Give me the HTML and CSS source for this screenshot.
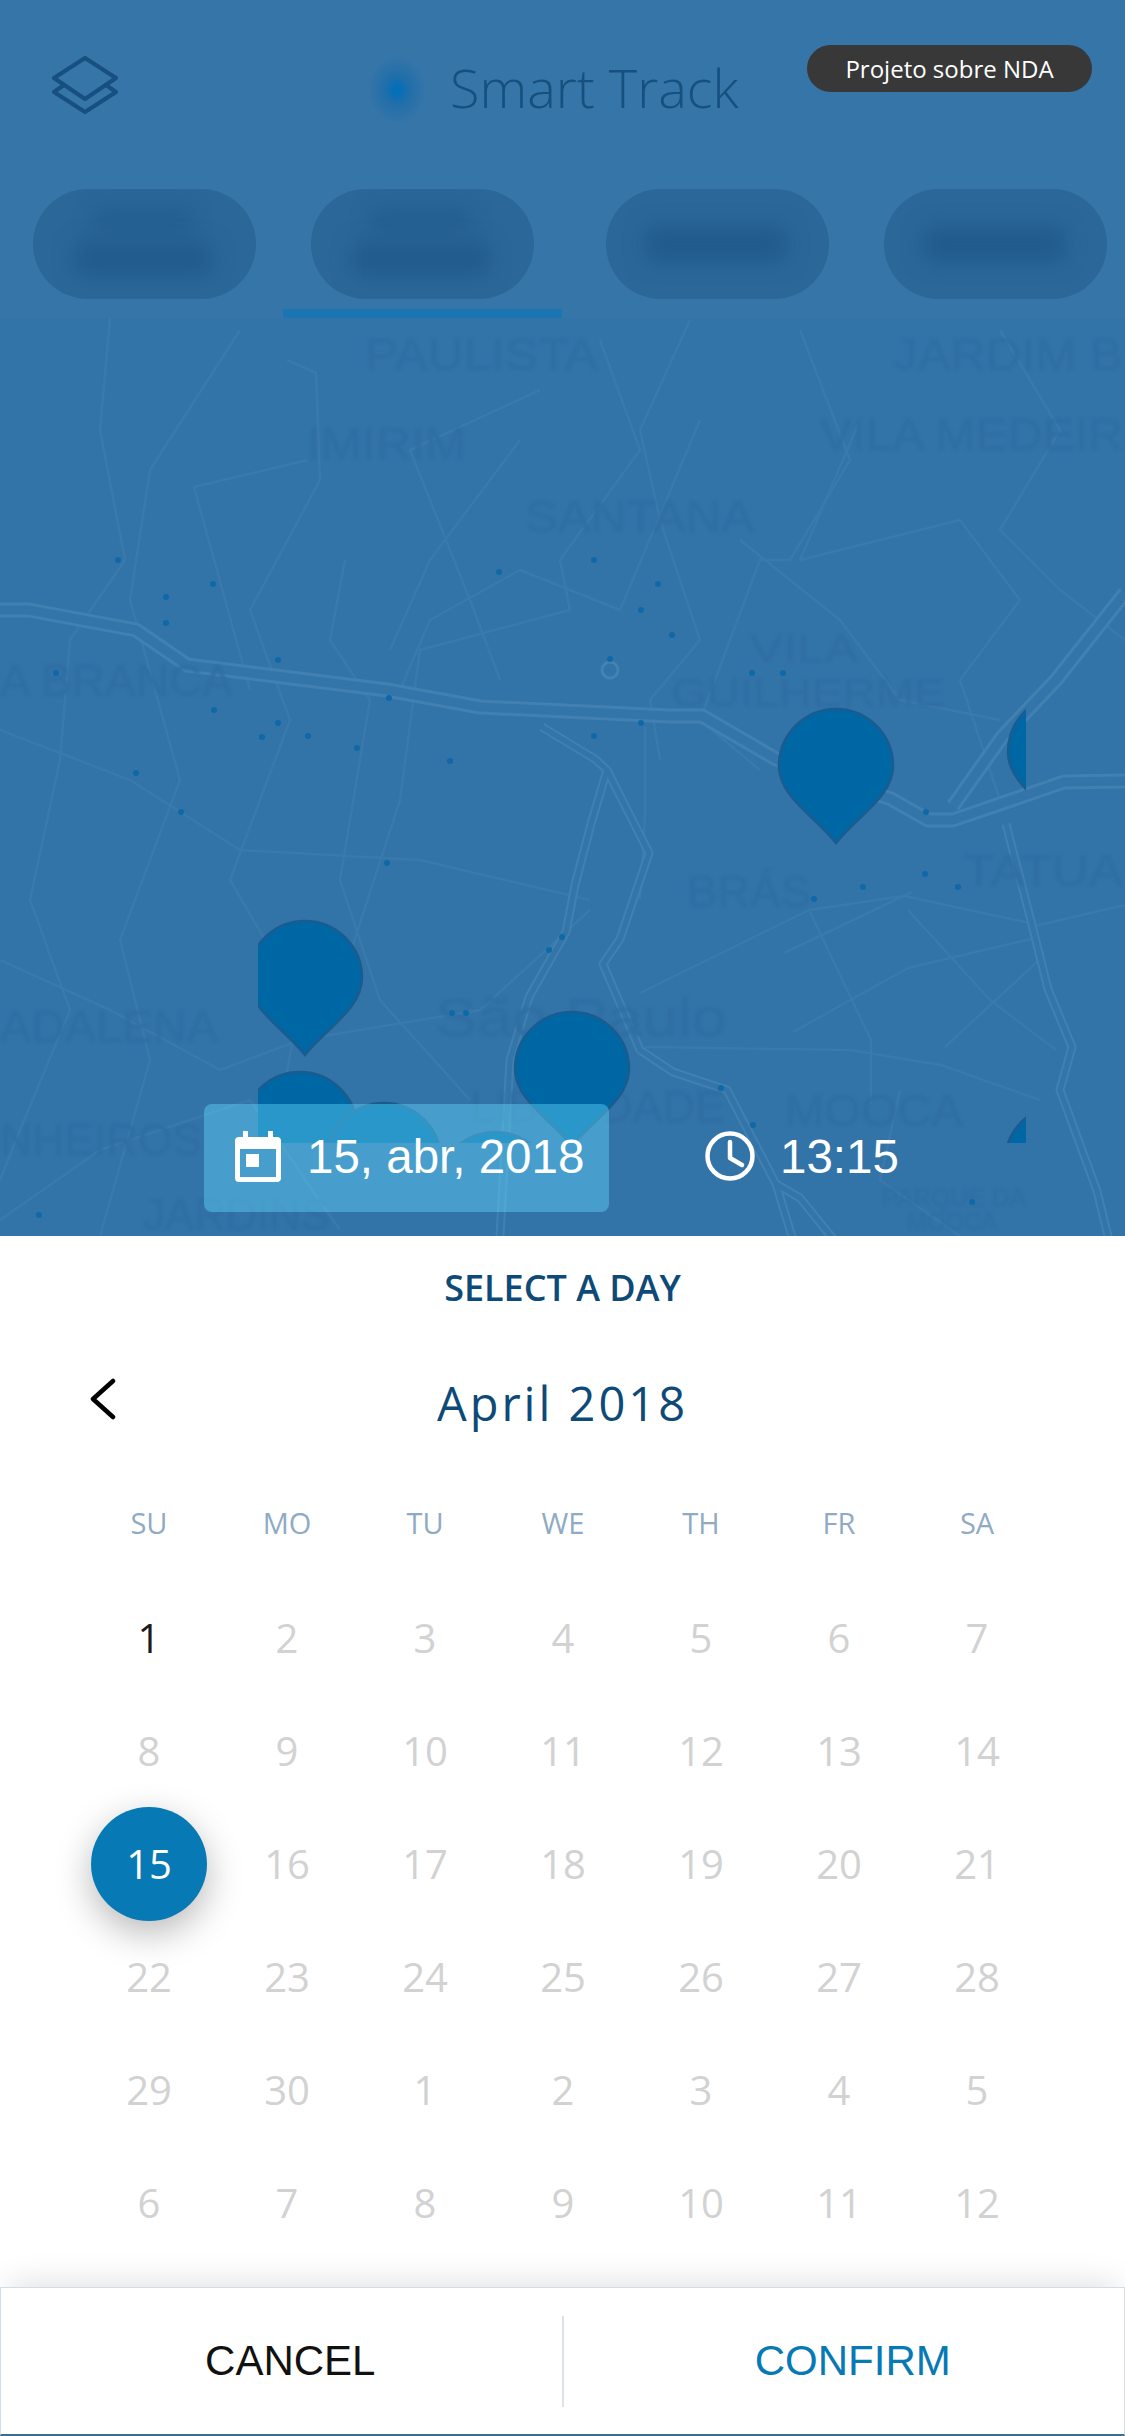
FILE: index.html
```html
<!DOCTYPE html>
<html lang="en">
<head>
  <meta charset="UTF-8">
  <title>Smart Track - Select a day</title>
  <link rel="stylesheet" href="styles.css">
</head>
<body>

<div class="screen">

  <header class="topbar">
    <div class="topbar-row">
      <svg class="layers-icon" viewBox="0 0 66 58" width="66" height="58">
        <path d="M33 2 L64 22 L33 43 L2 22 Z"/>
        <path d="M12 29 L2 36 L33 56 L64 36 L54 29"/>
      </svg>
      <span class="logo-glow"></span>
      <span class="app-title">Smart Track</span>
    </div>
    <span class="nda-badge">Projeto sobre NDA</span>

    <nav class="tabs">
      <div class="tab tab-first"><div class="tab-pill"><i class="blob blob-top"></i><i class="blob blob-bottom"></i></div></div>
      <div class="tab tab-active"><div class="tab-pill"><i class="blob blob-top"></i><i class="blob blob-bottom"></i></div></div>
      <div class="tab tab-wide"><div class="tab-pill"><i class="blob blob-single"></i></div></div>
      <div class="tab tab-last"><div class="tab-pill"><i class="blob blob-single"></i></div></div>
    </nav>
  </header>

  <section class="map">
    <svg class="map-canvas" viewBox="0 318 1125 918" width="1125" height="918">
      <defs>
        <clipPath id="pinArea"><rect x="258" y="600" width="768" height="543"/></clipPath>
        <path id="pin" d="M0 134 C-20 108 -57 88 -57 57 A57 57 0 1 1 57 57 C57 88 20 108 0 134 Z"/>
      </defs>

      <!-- minor streets -->
      <g class="streets">
        <polyline points="110,318 100,430 125,560 70,640 60,760 30,900 70,1010 20,1130 0,1180"/>
        <polyline points="240,330 150,470 130,600 180,780 120,940 150,1060 100,1236"/>
        <polyline points="287,360 316,373 320,480 250,610 290,720 230,880 300,1000 280,1110"/>
        <polyline points="308,460 194,487 250,690"/>
        <polyline points="345,560 330,640 370,700 340,880 380,1000 470,1100"/>
        <polyline points="540,390 410,450 470,600 500,680"/>
        <polyline points="520,440 430,560 390,650"/>
        <polyline points="600,340 640,450 560,560 570,610 420,650 400,800 335,1000"/>
        <polyline points="690,320 640,430 660,520 700,640 650,700 660,760"/>
        <polyline points="700,420 620,610 520,570 430,620 400,690"/>
        <polyline points="800,330 850,460 790,560 760,560 700,720 760,770"/>
        <polyline points="860,420 800,560 960,520 1020,600 960,680 1000,800"/>
        <polyline points="1000,330 1060,430 1000,530 1060,590 1125,640"/>
        <polyline points="740,540 840,620 900,700 1000,720"/>
        <polyline points="0,730 130,780 240,850 420,860 590,900"/>
        <polyline points="0,960 110,1010 220,1070 300,1040 480,1010 590,910"/>
        <polyline points="0,1220 100,1150 250,1100 340,1230"/>
        <polyline points="640,993 809,910 904,896 1039,925 1125,905"/>
        <polyline points="645,1047 850,1050 941,1065 1040,1100"/>
        <polyline points="809,910 871,1040 871,1104"/>
        <polyline points="784,953 912,892"/>
        <polyline points="793,1032 908,968 1031,939"/>
        <polyline points="908,910 990,1000 1056,1050"/>
        <polyline points="945,1047 1039,960"/>
        <polyline points="645,727 645,817 640,900"/>
        <polyline points="900,1090 880,1180 960,1236"/>
      </g>

      <!-- main roads -->
      <g class="roads">
        <polyline class="road-edge" points="542,727 595,759 607,770 591,824 575,885 566,932 529,997 510,1060 500,1236"/>
        <polyline class="road-edge" points="607,770 649,853 620,939 603,964 640,1050 673,1072 727,1090 776,1184 793,1240"/>
        <polyline class="road-edge" points="1006,824 1031,921 1048,989 1072,1047 1060,1090 1097,1191 1109,1240"/>
        <polyline class="road-edge" points="776,1184 800,1198 834,1240"/>
        <polyline class="road-fill" points="542,727 595,759 607,770 591,824 575,885 566,932 529,997 510,1060 500,1236"/>
        <polyline class="road-fill" points="607,770 649,853 620,939 603,964 640,1050 673,1072 727,1090 776,1184 793,1240"/>
        <polyline class="road-fill" points="1006,824 1031,921 1048,989 1072,1047 1060,1090 1097,1191 1109,1240"/>
        <polyline class="road-fill" points="776,1184 800,1198 834,1240"/>
      </g>
      <circle class="roundabout" cx="610" cy="670" r="8"/>
      <g class="highway">
        <polyline class="highway-edge" points="1125,593 1056,680 1002,737 953,806"/>
        <polyline class="highway-edge" points="0,610 29,610 136,630 187,665 387,690 480,707 669,716 702,716 776,759 891,799 928,820 953,820 1064,782 1125,781"/>
        <polyline class="highway-fill" points="1125,593 1056,680 1002,737 953,806"/>
        <polyline class="highway-fill" points="0,610 29,610 136,630 187,665 387,690 480,707 669,716 702,716 776,759 891,799 928,820 953,820 1064,782 1125,781"/>
      </g>

      <g class="labels">
        <text x="365" y="370" textLength="233" lengthAdjust="spacingAndGlyphs">PAULISTA</text>
        <text x="893" y="370" textLength="230" lengthAdjust="spacingAndGlyphs">JARDIM B</text>
        <text x="307" y="459" textLength="159" lengthAdjust="spacingAndGlyphs">IMIRIM</text>
        <text x="820" y="450" textLength="303" lengthAdjust="spacingAndGlyphs">VILA MEDEIR</text>
        <text x="525" y="532" textLength="229" lengthAdjust="spacingAndGlyphs">SANTANA</text>
        <text x="0" y="696" textLength="233" lengthAdjust="spacingAndGlyphs">A BRANCA</text>
        <text x="750" y="662" textLength="108" lengthAdjust="spacingAndGlyphs" class="label-tight">VILA</text>
        <text x="671" y="706" textLength="274" lengthAdjust="spacingAndGlyphs" class="label-tight">GUILHERME</text>
        <text x="687" y="907" textLength="124" lengthAdjust="spacingAndGlyphs">BRÁS</text>
        <text x="963" y="886" textLength="160" lengthAdjust="spacingAndGlyphs">TATUA</text>
        <text x="0" y="1042" textLength="218" lengthAdjust="spacingAndGlyphs">ADALENA</text>
        <text x="435" y="1036" textLength="292" lengthAdjust="spacingAndGlyphs" class="label-city">São Paulo</text>
        <text x="0" y="1155" textLength="202" lengthAdjust="spacingAndGlyphs">NHEIROS</text>
        <text x="470" y="1122" textLength="255" lengthAdjust="spacingAndGlyphs">LIBERDADE</text>
        <text x="785" y="1126" textLength="178" lengthAdjust="spacingAndGlyphs">MOOCA</text>
        <text x="143" y="1230" textLength="187" lengthAdjust="spacingAndGlyphs">JARDINS</text>
        <text x="882" y="1206" textLength="144" lengthAdjust="spacingAndGlyphs" class="label-small">PARQUE DA</text>
        <text x="907" y="1230" textLength="90" lengthAdjust="spacingAndGlyphs" class="label-small">MOOCA</text>
      </g>

      <g class="dots">
        <circle cx="118" cy="560" r="3"/><circle cx="213" cy="584" r="3"/><circle cx="166" cy="597" r="3"/>
        <circle cx="166" cy="623" r="3"/><circle cx="278" cy="660" r="3"/><circle cx="56" cy="673" r="3"/>
        <circle cx="214" cy="710" r="3"/><circle cx="278" cy="723" r="3"/><circle cx="262" cy="737" r="3"/>
        <circle cx="308" cy="736" r="3"/><circle cx="357" cy="748" r="3"/><circle cx="450" cy="761" r="3"/>
        <circle cx="136" cy="773" r="3"/><circle cx="181" cy="812" r="3"/><circle cx="389" cy="698" r="3"/>
        <circle cx="499" cy="572" r="3"/><circle cx="594" cy="560" r="3"/><circle cx="658" cy="584" r="3"/>
        <circle cx="641" cy="610" r="3"/><circle cx="672" cy="635" r="3"/><circle cx="610" cy="659" r="3"/>
        <circle cx="752" cy="673" r="3"/><circle cx="783" cy="673" r="3"/><circle cx="641" cy="723" r="3"/>
        <circle cx="594" cy="736" r="3"/><circle cx="387" cy="863" r="3"/><circle cx="814" cy="899" r="3"/>
        <circle cx="863" cy="887" r="3"/><circle cx="925" cy="874" r="3"/><circle cx="958" cy="887" r="3"/>
        <circle cx="452" cy="1013" r="3"/><circle cx="466" cy="1013" r="3"/><circle cx="549" cy="950" r="3"/>
        <circle cx="562" cy="937" r="3"/><circle cx="721" cy="1088" r="3"/><circle cx="753" cy="1125" r="3"/>
        <circle cx="972" cy="1202" r="3"/><circle cx="39" cy="1215" r="3"/><circle cx="926" cy="812" r="3"/>
      </g>

      <g class="pins" clip-path="url(#pinArea)">
        <use href="#pin" x="836" y="709"/>
        <use href="#pin" x="1065" y="695"/>
        <use href="#pin" x="305" y="921"/>
        <use href="#pin" x="300" y="1072"/>
        <use href="#pin" x="384" y="1103"/>
        <use href="#pin" x="495" y="1132"/>
        <use href="#pin" x="572" y="1012"/>
        <use href="#pin" x="1062" y="1105"/>
      </g>
    </svg>

    <div class="when">
      <div class="when-date">
        <svg class="when-icon" viewBox="0 0 46 51" width="46" height="51">
          <path fill-rule="evenodd" d="M8 0 H13 V6 H33 V0 H38 V6 H42 A4 4 0 0 1 46 10 V47 A4 4 0 0 1 42 51 H4 A4 4 0 0 1 0 47 V10 A4 4 0 0 1 4 6 H8 Z M5 18 V46 H41 V18 Z M11 23 H24 V36 H11 Z"/>
        </svg>
        <span>15, abr, 2018</span>
      </div>
      <div class="when-time">
        <svg class="clock-icon" viewBox="0 0 50 50" width="50" height="50">
          <circle cx="25" cy="25" r="22.5"/>
          <path d="M25 11 V27 L37 34"/>
        </svg>
        <span>13:15</span>
      </div>
    </div>
  </section>

  <section class="sheet">
    <h2 class="sheet-title">SELECT A DAY</h2>

    <div class="month-row">
      <svg class="back-icon" viewBox="0 0 26 42" width="26" height="42">
        <path d="M23 3 L3 21 L23 39"/>
      </svg>
      <span class="month-name">April 2018</span>
    </div>

    <div class="weekdays">
      <span>SU</span><span>MO</span><span>TU</span><span>WE</span><span>TH</span><span>FR</span><span>SA</span>
    </div>

    <div class="days">
      <span class="day day-on">1</span><span class="day">2</span><span class="day">3</span><span class="day">4</span><span class="day">5</span><span class="day">6</span><span class="day">7</span>
      <span class="day">8</span><span class="day">9</span><span class="day">10</span><span class="day">11</span><span class="day">12</span><span class="day">13</span><span class="day">14</span>
      <span class="day"><b class="day-selected">15</b></span><span class="day">16</span><span class="day">17</span><span class="day">18</span><span class="day">19</span><span class="day">20</span><span class="day">21</span>
      <span class="day">22</span><span class="day">23</span><span class="day">24</span><span class="day">25</span><span class="day">26</span><span class="day">27</span><span class="day">28</span>
      <span class="day">29</span><span class="day">30</span><span class="day">1</span><span class="day">2</span><span class="day">3</span><span class="day">4</span><span class="day">5</span>
      <span class="day">6</span><span class="day">7</span><span class="day">8</span><span class="day">9</span><span class="day">10</span><span class="day">11</span><span class="day">12</span>
    </div>
  </section>

  <footer class="actions">
    <button class="action action-cancel" type="button">CANCEL</button>
    <span class="action-divider"></span>
    <button class="action action-confirm" type="button">CONFIRM</button>
  </footer>

</div>

</body>
</html>
```

FILE: styles.css
```css
html, body {
  margin: 0;
  padding: 0;
}
body {
  width: 1125px;
  height: 2436px;
  overflow: hidden;
  background-color: #fff;
  font-family: "Open Sans", "Liberation Sans", sans-serif;
}
.screen {
  display: flex;
  flex-direction: column;
  height: 2436px;
}

/* top bar */
.topbar {
  position: relative;
  flex: none;
  height: 318px;
  background-color: #3675a8;
}
.topbar-row {
  display: flex;
  align-items: center;
  height: 178px;
  padding-left: 52px;
}
.layers-icon {
  flex: none;
  margin-top: -8px;
  fill: none;
  stroke: #164f80;
  stroke-width: 4;
  stroke-linejoin: round;
  stroke-linecap: round;
}
.logo-glow {
  flex: none;
  width: 58px;
  height: 68px;
  margin-left: 250px;
  margin-top: 2px;
  border-radius: 50%;
  background: radial-gradient(closest-side, #056fb8 0, #056fb8 12%, rgba(15, 105, 172, .55) 42%, rgba(54, 117, 168, 0) 100%);
}
.app-title {
  margin-left: 24px;
  margin-top: -4px;
  font-size: 54px;
  font-weight: 300;
  color: #15507f;
}
.nda-badge {
  position: absolute;
  top: 45px;
  left: 807px;
  width: 285px;
  height: 47px;
  border-radius: 24px;
  background-color: #383838;
  color: #fff;
  font-size: 24px;
  line-height: 47px;
  text-align: center;
}
.tabs {
  display: flex;
  padding: 11px 0 0 6px;
}
.tab {
  display: flex;
  justify-content: center;
  flex: none;
  height: 129px;
  box-sizing: border-box;
  border-bottom: 9px solid transparent;
}
.tab-first { width: 277px; }
.tab-active { width: 279px; border-bottom-color: #1a75b2; }
.tab-wide { width: 311px; }
.tab-last { width: 244px; }
.tab-pill {
  position: relative;
  width: 223px;
  height: 110px;
  border-radius: 55px;
  background-color: #2b6798;
  overflow: hidden;
}
.blob {
  position: absolute;
  background-color: #215a8c;
  border-radius: 6px;
  filter: blur(10px);
}
.blob-top { left: 60px; top: 18px; width: 100px; height: 28px; opacity: .6; }
.blob-bottom { left: 42px; top: 54px; width: 136px; height: 32px; }
.blob-single { left: 40px; top: 38px; width: 140px; height: 34px; }

/* map */
.map {
  position: relative;
  flex: none;
  height: 918px;
  background-color: #3273a8;
  overflow: hidden;
}
.map-canvas {
  display: block;
}
.streets polyline {
  fill: none;
  stroke: #3a79ac;
  stroke-width: 2.5;
  stroke-linejoin: round;
}
.roads polyline,
.highway polyline {
  fill: none;
  stroke-linejoin: round;
}
.road-edge {
  stroke: #4180b1;
  stroke-width: 9;
}
.road-fill {
  stroke: #3375a9;
  stroke-width: 5;
}
.roundabout {
  fill: none;
  stroke: #4382b2;
  stroke-width: 3;
}
.highway-edge {
  stroke: #4180b1;
  stroke-width: 15;
}
.highway-fill {
  stroke: #3375a9;
  stroke-width: 9;
}
.labels text {
  fill: #2f6ea2;
  font-family: "Liberation Sans", sans-serif;
  font-size: 44px;
  filter: blur(1.5px);
}
.labels .label-tight {
  font-size: 38px;
}
.labels .label-city {
  font-size: 54px;
}
.labels .label-small {
  font-size: 24px;
}
.dots circle {
  fill: #0f69a8;
}
.pins use {
  fill: #0067a5;
  stroke: #1b5c90;
  stroke-width: 2.5;
}

/* date and time over the map */
.when {
  position: absolute;
  left: 204px;
  bottom: 24px;
  display: flex;
  align-items: center;
  color: #fff;
  font-family: "Liberation Sans", sans-serif;
  font-size: 47.5px;
}
.when-date {
  display: flex;
  align-items: center;
  gap: 26px;
  width: 405px;
  height: 108px;
  box-sizing: border-box;
  padding: 0 0 4px 31px;
  border-radius: 8px;
  background-color: rgba(102, 222, 255, .41);
}
.when-icon {
  flex: none;
  fill: #fff;
}
.when-time {
  display: flex;
  align-items: center;
  gap: 25px;
  margin-left: 96px;
  padding-bottom: 4px;
}
.clock-icon {
  flex: none;
  fill: none;
  stroke: #fff;
  stroke-width: 4.5;
  stroke-linejoin: round;
  stroke-linecap: round;
}

/* calendar */
.sheet {
  flex: 1;
  background-color: #fff;
}
.sheet-title {
  margin: 0;
  height: 104px;
  line-height: 104px;
  font-size: 36px;
  font-weight: 600;
  color: #0e4a78;
  text-align: center;
}
.month-row {
  position: relative;
  height: 126px;
  display: flex;
  align-items: center;
  justify-content: center;
}
.back-icon {
  position: absolute;
  left: 90px;
  top: 38px;
  fill: none;
  stroke: #000;
  stroke-width: 4.5;
  stroke-linecap: round;
  stroke-linejoin: round;
}
.month-name {
  font-size: 47px;
  letter-spacing: 3px;
  color: #0e4a78;
}
.weekdays,
.days {
  display: grid;
  grid-template-columns: repeat(7, 138px);
  padding-left: 80px;
  text-align: center;
}
.weekdays {
  height: 115px;
  line-height: 114px;
  font-size: 29px;
  color: #8fabc4;
}
.days {
  grid-auto-rows: 113px;
}
.day {
  display: flex;
  align-items: center;
  justify-content: center;
  font-size: 40px;
  color: #d2d2d2;
}
.day-on {
  color: #1c1c1c;
}
.day-selected {
  display: flex;
  align-items: center;
  justify-content: center;
  flex: none;
  width: 116px;
  height: 114px;
  border-radius: 50%;
  background-color: #0779b5;
  box-shadow: 0 12px 36px rgba(0, 0, 0, .28);
  color: #fff;
  font-weight: 400;
}

/* footer buttons */
.actions {
  display: flex;
  align-items: center;
  flex: none;
  height: 149px;
  box-sizing: border-box;
  border: 1px solid #d3dde5;
  border-bottom: 2px solid #3d6d90;
  background-color: #fff;
  box-shadow: 0 -12px 30px -8px rgba(0, 0, 0, .12);
  position: relative;
}
.action {
  flex: 1;
  height: 100%;
  padding: 0 0 0 18px;
  border: 0;
  background: none;
  font-family: "Liberation Sans", sans-serif;
  font-size: 42px;
}
.action-cancel { color: #111; }
.action-confirm { color: #0779b5; }
.action-divider {
  flex: none;
  width: 2px;
  height: 91px;
  background-color: #dbe2e8;
}
```
